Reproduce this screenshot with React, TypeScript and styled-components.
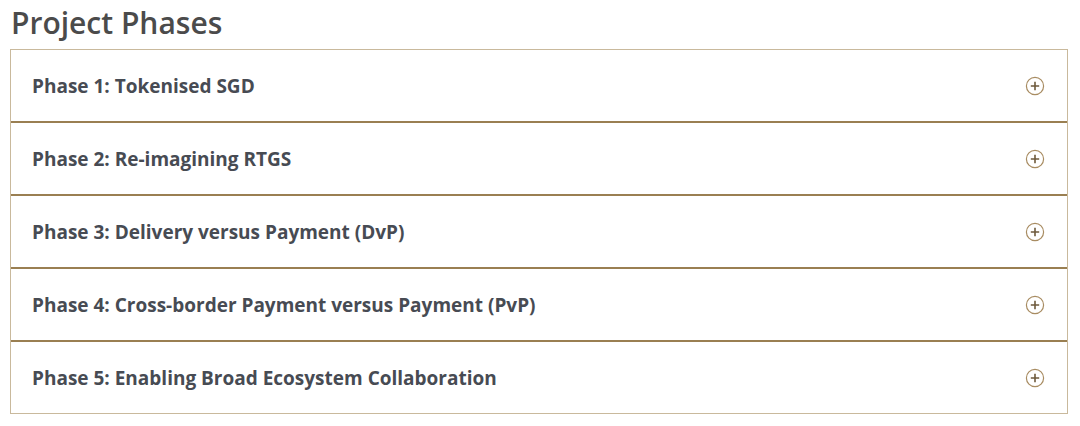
import React from 'react';
import styled, { createGlobalStyle } from 'styled-components';

const phases = [
  'Phase 1: Tokenised SGD',
  'Phase 2: Re-imagining RTGS',
  'Phase 3: Delivery versus Payment (DvP)',
  'Phase 4: Cross-border Payment versus Payment (PvP)',
  'Phase 5: Enabling Broad Ecosystem Collaboration',
];

export default function App() {
  return (
    <>
      <GlobalStyle />
      <Page>
        <Title>Project Phases</Title>
        <Accordion>
          {phases.map((phase) => (
            <Item key={phase}>
              <ItemTitle>{phase}</ItemTitle>
              <PlusIcon />
            </Item>
          ))}
        </Accordion>
      </Page>
    </>
  );
}

const GlobalStyle = createGlobalStyle`
  body {
    margin: 0;
    background: #ffffff;
    font-family: 'Open Sans', Lato, sans-serif;
  }
`;

const Page = styled.div`
  width: 1080px;
  padding: 4px 12px 0 10px;
  box-sizing: border-box;
`;

const Title = styled.h1`
  margin: 0 0 7px 1px;
  height: 38px;
  font-size: 30px;
  line-height: 38px;
  font-weight: 600;
  color: #4b4b4b;
`;

const Accordion = styled.div`
  border: 1.5px solid #c9b99c;
  display: flex;
  flex-direction: column;
`;

const Item = styled.div`
  height: 71px;
  display: flex;
  align-items: center;
  justify-content: space-between;
  padding: 0 22px 0 21px;
  & + & {
    border-top: 2px solid #9a7f52;
  }
`;

const ItemTitle = styled.h3`
  margin: 0;
  font-size: 19px;
  font-weight: 700;
  color: #474b53;
`;

function PlusIcon() {
  return (
    <IconSvg viewBox="0 0 20 20" width="20" height="20">
      <circle cx="10" cy="10" r="8.6" fill="none" stroke="#a88c62" strokeWidth="1.2" />
      <path d="M10 5.8v8.4M5.8 10h8.4" stroke="#6e5a3c" strokeWidth="1.6" />
    </IconSvg>
  );
}

const IconSvg = styled.svg`
  display: block;
`;
